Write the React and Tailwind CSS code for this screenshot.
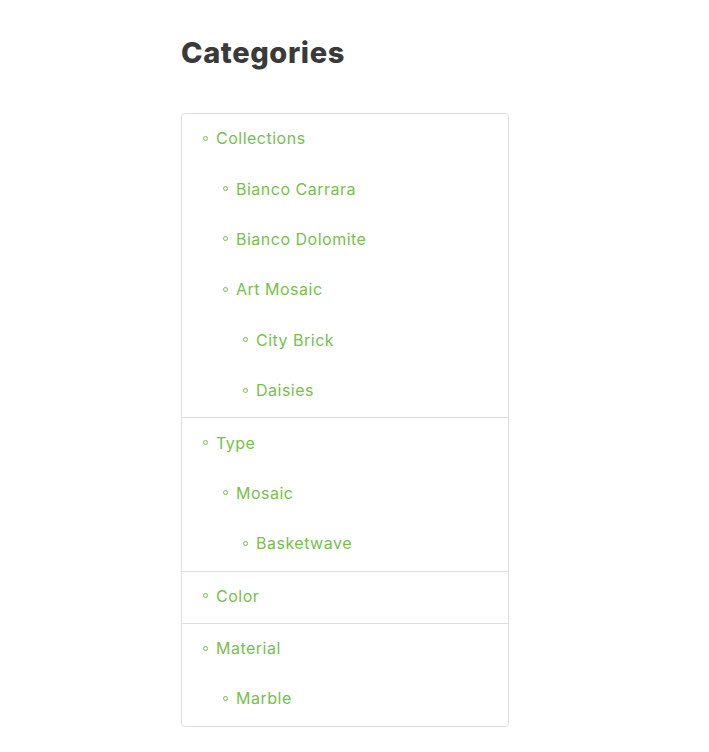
import React from 'react';

const sections = [
  [
    { label: 'Collections', level: 0 },
    { label: 'Bianco Carrara', level: 1 },
    { label: 'Bianco Dolomite', level: 1 },
    { label: 'Art Mosaic', level: 1 },
    { label: 'City Brick', level: 2 },
    { label: 'Daisies', level: 2 },
  ],
  [
    { label: 'Type', level: 0 },
    { label: 'Mosaic', level: 1 },
    { label: 'Basketwave', level: 2 },
  ],
  [{ label: 'Color', level: 0 }],
  [
    { label: 'Material', level: 0 },
    { label: 'Marble', level: 1 },
  ],
];

const indent = ['pl-[21px]', 'pl-[41px]', 'pl-[61px]'];

const App = () => {
  return (
    <div className="min-h-[752px] bg-white pt-[33px] pl-[181px]" style={{ fontFamily: 'Inter, "Noto Sans", sans-serif' }}>
      <h2 className="text-[29px] leading-[40px] font-extrabold text-[#3a3a3a] tracking-[0.6px]">Categories</h2>

      <div className="mt-[40px] w-[328px] border border-[#dedede] rounded-[4px]">
        {sections.map((items, i) => (
          <ul key={i} className={`pb-[1px] ${i > 0 ? 'border-t border-[#dedede]' : ''}`}>
            {items.map((item) => (
              <li
                key={item.label}
                className={`h-[50.4px] pb-[2px] flex items-center gap-[8px] ${indent[item.level]}`}
              >
                <span className="w-[5px] h-[5px] rounded-full border border-[#77bf4b] shrink-0" />
                <a href="#" className="text-[16px] text-[#77bf4b] leading-[24px] tracking-[0.5px]">
                  {item.label}
                </a>
              </li>
            ))}
          </ul>
        ))}
      </div>
    </div>
  );
};

export default App;
